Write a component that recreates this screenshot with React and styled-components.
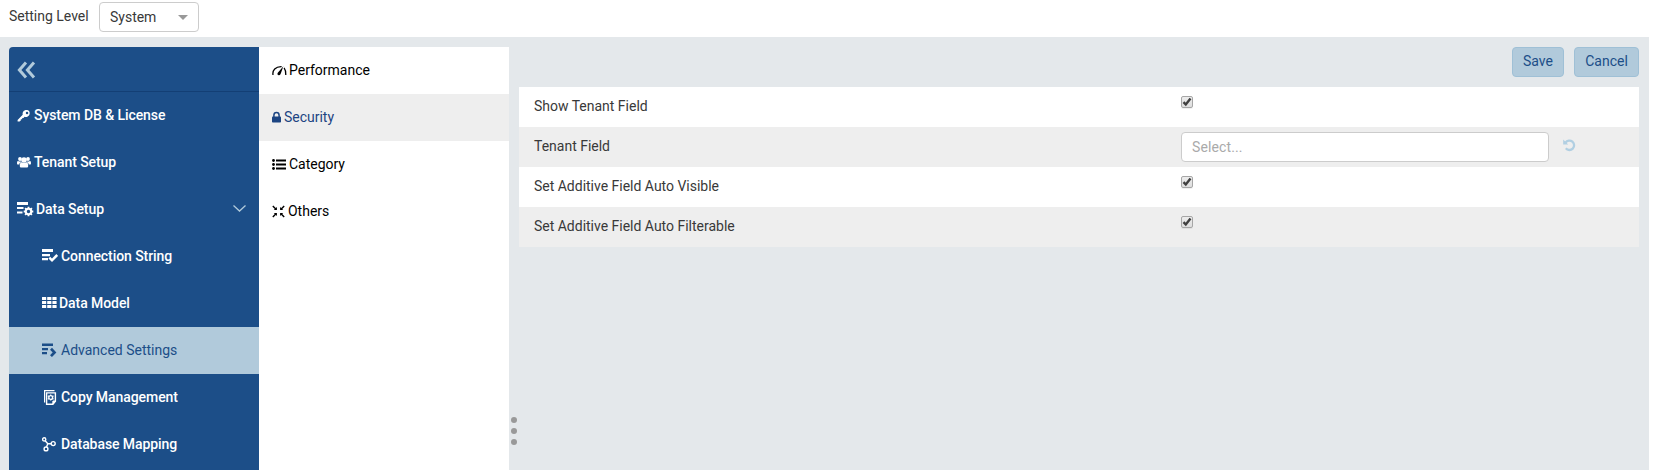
import React from 'react';
import styled, { createGlobalStyle, css } from 'styled-components';

const GlobalStyle = createGlobalStyle`
  * { box-sizing: border-box; }
  html, body { margin: 0; padding: 0; height: 100%; overflow: hidden; background: #fff; }
  body { font-family: Roboto, "Liberation Sans", sans-serif; font-size: 14px; line-height: 20px; color: #393939; letter-spacing: -0.01px; }
  svg { display: block; flex: none; }
`;

const Page = styled.div`
  display: flex;
  flex-direction: column;
  width: 1657px;
  height: 470px;
  overflow: hidden;
`;

const TopBar = styled.header`
  display: flex;
  align-items: flex-start;
  height: 37px;
  padding: 2px 9px 0;
`;

const TopLabel = styled.label`
  width: 90px;
  padding-top: 4px;
  white-space: nowrap;
`;

const LevelSelect = styled.button`
  display: flex;
  align-items: center;
  justify-content: space-between;
  width: 100px;
  height: 30px;
  padding: 0 10px;
  border: 1px solid #ccc;
  border-radius: 4px;
  background: #fff;
  color: inherit;
  font: inherit;
  letter-spacing: inherit;
`;

const Workspace = styled.main`
  display: flex;
  flex: 1;
  width: 1649px;
  padding: 10px 10px 0 9px;
  background: #e4e8eb;
`;

const Sidebar = styled.nav`
  width: 250px;
  background: #1c4e88;
  border-top-left-radius: 4px;
`;

const SidebarHeader = styled.div`
  display: flex;
  align-items: center;
  height: 45px;
  padding: 2px 0 0 8px;
  border-bottom: 1px solid #133f75;
`;

const NavItem = styled.a`
  display: flex;
  align-items: center;
  height: 47px;
  padding-left: ${(p) => (p.$nested ? 33 : 8)}px;
  padding-right: 13px;
  color: #fff;
  font-weight: 500;
  letter-spacing: -0.07px;
  ${(p) =>
    p.$active &&
    css`
      background: #b1cadb;
      color: #1c4e88;
      font-weight: 400;
      letter-spacing: 0;
    `}
`;

const IconSlot = styled.span`
  width: ${(p) => p.$w}px;
  flex: none;
`;

const NavText = styled.span`
  flex: 1;
  padding-bottom: 1px;
  white-space: nowrap;
`;

const SubNav = styled.nav`
  width: 250px;
  background: #fff;
`;

const SubItem = styled.a`
  display: flex;
  align-items: center;
  height: 47px;
  padding-left: 13px;
  background: ${(p) => (p.$active ? '#eee' : '#fff')};
  color: ${(p) => (p.$active ? '#1c4482' : '#000')};
`;

const Splitter = styled.div`
  display: flex;
  flex-direction: column;
  gap: 5px;
  width: 10px;
  padding: 370px 0 0 2px;
`;

const Dot = styled.i`
  width: 6px;
  height: 6px;
  border-radius: 50%;
  background: #999;
`;

const Content = styled.section`
  flex: 1;
`;

const Actions = styled.div`
  display: flex;
  justify-content: flex-end;
  gap: 10px;
  height: 40px;
`;

const ActionButton = styled.button`
  width: ${(p) => p.$w}px;
  height: 30px;
  padding: 0 0 2px;
  border: 1px solid #9fc0d6;
  border-radius: 4px;
  background: #b1cadb;
  color: #1c4e88;
  font: inherit;
  letter-spacing: inherit;
`;

const SettingRow = styled.div`
  display: grid;
  grid-template-columns: 647px 1fr;
  height: 40px;
  padding-left: 15px;
  background: ${(p) => (p.$striped ? '#eee' : '#fff')};
`;

const SettingLabel = styled.span`
  padding-top: 9px;
`;

const SettingValue = styled.div`
  display: flex;
  align-items: flex-start;
  padding-top: ${(p) => p.$top}px;
`;

const CheckBox = styled.span`
  display: flex;
  align-items: center;
  justify-content: center;
  width: 12px;
  height: 12px;
  border: 1px solid #a6a6a6;
  border-radius: 2px;
  background: linear-gradient(#ededed, #dedede);
  box-shadow: 0 1px 0 rgba(0, 0, 0, 0.06);
`;

const FieldSelect = styled.div`
  width: 368px;
  height: 30px;
  margin-right: 14px;
  padding: 4px 10px;
  border: 1px solid #ccc;
  border-radius: 4px;
  background: #fff;
  color: #aaa;
  letter-spacing: 0.12px;
`;

const ResetButton = styled.span`
  padding-top: 7px;
  color: #b1cfe2;
`;

const Svg = ({ w, h, children }) => (
  <svg width={w} height={h} viewBox={`0 0 ${w} ${h}`} fill="currentColor">
    {children}
  </svg>
);

const CollapseIcon = () => (
  <svg width="19" height="18" viewBox="0 0 19 18" fill="none" stroke="#b1cadb" strokeWidth="3">
    <path d="M9 1.5 2.400 9 9 16.500M17 1.500 10.400 9 17 16.500" />
  </svg>
);

const KeyIcon = () => (
  <Svg w={14} h={13}>
    <path fillRule="evenodd" d="M6.300 2.500C7.400 1 9.400.6 11 1.300c1.700.9 2.200 2.900 1.300 4.600C11.300 7.600 9.200 8.300 7.500 7.700L6.500 8.900H5.200v1.300H3.800v1.300L2.600 12.600H.6V10.900L5.700 5.700C5.500 4.500 5.600 3.400 6.300 2.500zM10 2.700a1.250 1.250 0 1 0 .1 2.500 1.250 1.250 0 0 0-.1-2.500z" />
  </Svg>
);

const UsersIcon = () => (
  <Svg w={14} h={13}>
    <circle cx="3" cy="3" r="1.900" />
    <circle cx="11" cy="3" r="1.900" />
    <circle cx="7" cy="4" r="2.800" />
    <path d="M0 7c0-1.400.5-2 1.200-2 .8.600 1.600.7 2.400.4L4.300 6C2.900 6.500 2.400 7.500 2.300 8.500H.8C.3 8.500 0 8 0 7zM14 7c0-1.400-.5-2-1.200-2-.8.600-1.600.7-2.400.4L9.700 6c1.400.5 1.900 1.500 2 2.500h1.500c.5 0 .8-.5.8-1.500zM2.800 9.900C2.800 7.500 3.400 6.300 4.700 6.200c1.400 1.100 3.200 1.100 4.600 0 1.300.1 1.900 1.300 1.900 3.700 0 1.100-.6 1.600-1.600 1.600H4.400c-1 0-1.600-.5-1.600-1.600z" />
  </Svg>
);

const DataSetupIcon = () => (
  <Svg w={17} h={15}>
    <path d="M0 0h11v3H0zM0 5h6.500v2H0zM0 9.500h5.500v2H0z" />
    <circle cx="11.500" cy="9.500" r="2.700" fill="none" stroke="currentColor" strokeWidth="2" />
    <g stroke="currentColor" strokeWidth="1.800">
      {[0, 45, 90, 135].map((a) => (
        <path key={a} d="M11.500 4.700v2M11.500 12.300v2" transform={`rotate(${a} 11.500 9.500)`} />
      ))}
    </g>
  </Svg>
);

const ConnectionIcon = () => (
  <Svg w={16} h={15}>
    <path d="M0 0h11v3H0zM0 5h8v2.200H0zM0 9h6v2.200H0z" />
    <path d="M7.300 8.600l2.700 2.700 5.200-5.300" fill="none" stroke="currentColor" strokeWidth="2.500" />
  </Svg>
);

const GridIcon = () => (
  <Svg w={15} h={13}>
    {[0, 4, 8].map((y) =>
      [0, 5.2, 10.4].map((x) => <rect key={`${x}-${y}`} x={x} y={y} width="4.200" height="3" rx=".3" />)
    )}
  </Svg>
);

const AdvancedIcon = () => (
  <Svg w={15} h={15}>
    <path d="M0 .5h11V3H0zM0 5h6v2.200H0zM0 9h5v2.200H0z" />
    <path d="M9 5.700l3.500 3.700L9 13.100" fill="none" stroke="currentColor" strokeWidth="2.700" />
  </Svg>
);

const CopyIcon = () => (
  <svg width="15" height="17" viewBox="0 0 15 17" fill="none" stroke="currentColor">
    <path d="M2.600 13.500V1.600H12.500" strokeWidth="1.200" />
    <path d="M4.600 3.900h8.800v8.300l-2.500 3H4.600z" strokeWidth="1.400" />
    <path d="M13.400 12l-2.500 3v-3z" fill="currentColor" />
    <circle cx="8.700" cy="8.500" r="1.900" strokeWidth="1.400" />
    <path d="M8.700 5.400v1.200M8.700 10.400v1.200M5.900 6.900l1.100.6M10.400 9.500l1.100.6M5.900 10.100L7 9.500M10.400 7.500l1.100-.6" strokeWidth="1.200" />
  </svg>
);

const MappingIcon = () => (
  <svg width="14" height="15" viewBox="0 0 14 15" fill="none" stroke="currentColor" strokeWidth="1.400">
    <circle cx="2.200" cy="2.400" r="1.600" />
    <circle cx="4" cy="11.900" r="1.900" />
    <circle cx="11.200" cy="6.600" r="2" />
    <path d="M3.200 3.700l2.600 3h3.400M5.800 6.700L4.500 10" />
  </svg>
);

const ChevronIcon = () => (
  <svg width="13" height="9" viewBox="0 0 13 9" fill="none" stroke="#b1cadb" strokeWidth="1.300">
    <path d="M.5.600l6 5.500 6-5.500" />
  </svg>
);

const GaugeIcon = () => (
  <svg width="15" height="11" viewBox="0 0 15 11" fill="none" stroke="currentColor">
    <path d="M1 10C.2 5.300 3.500 1.500 9.600 1.700" strokeWidth="1.300" />
    <path d="M12.100 2.900c1.300 1.800 1.900 4.200 1.700 7.100" strokeWidth="1.300" />
    <path d="M11.400 1.300L8.600 9.100c-.5 1.100-1.500 1.400-2.400 1-.9-.5-1-1.500-.4-2.400z" fill="currentColor" stroke="none" />
  </svg>
);

const LockIcon = () => (
  <Svg w={9} h={13}>
    <rect x="0" y="5.600" width="9" height="6" rx=".8" />
    <path d="M1.900 6.200V4.200a2.600 2.600 0 0 1 5.200 0v2" fill="none" stroke="currentColor" strokeWidth="1.500" />
  </Svg>
);

const ListIcon = () => (
  <Svg w={14} h={11}>
    {[1.5, 5.5, 9.5].map((y) => (
      <g key={y}>
        <circle cx="1.500" cy={y} r="1.400" />
        <rect x="4" y={y - 1} width="10" height="2" />
      </g>
    ))}
  </Svg>
);

const CompressIcon = () => (
  <svg width="13" height="13" viewBox="0 0 13 13" fill="none" stroke="currentColor" strokeWidth="1.400">
    <path d="M.8 1.100l3 3M12.200 1.100l-3 3M.8 11.900l3-3M12.200 11.900l-3-3" />
    <path d="M4.900 2v3.100H1.800zM8.100 2v3.100h3.100zM4.900 11V7.900H1.800zM8.100 11V7.900h3.100z" fill="currentColor" stroke="none" />
  </svg>
);

const CheckMark = () => (
  <svg width="10" height="10" viewBox="0 0 10 10" fill="none" stroke="#404040" strokeWidth="2.400">
    <path d="M1.500 5.100l2.300 2.400L8.500 1.500" />
  </svg>
);

const UndoIcon = () => (
  <svg width="13" height="13" viewBox="0 0 13 13" fill="none" stroke="currentColor" strokeWidth="2.300">
    <path d="M2.500 3.700A4.700 4.700 0 1 1 2.800 9.300" />
    <path d="M.2.400v5h5z" fill="currentColor" stroke="none" />
  </svg>
);

const navItems = [
  { text: 'System DB & License', Icon: KeyIcon, w: 17 },
  { text: 'Tenant Setup', Icon: UsersIcon, w: 17 },
  { text: 'Data Setup', Icon: DataSetupIcon, w: 19, open: true },
  { text: 'Connection String', Icon: ConnectionIcon, w: 19, nested: true },
  { text: 'Data Model', Icon: GridIcon, w: 17, nested: true },
  { text: 'Advanced Settings', Icon: AdvancedIcon, w: 19, nested: true, active: true },
  { text: 'Copy Management', Icon: CopyIcon, w: 19, nested: true },
  { text: 'Database Mapping', Icon: MappingIcon, w: 19, nested: true },
];

const subItems = [
  { text: 'Performance', Icon: GaugeIcon, w: 17 },
  { text: 'Security', Icon: LockIcon, w: 12, active: true },
  { text: 'Category', Icon: ListIcon, w: 17 },
  { text: 'Others', Icon: CompressIcon, w: 16 },
];

const settings = [
  { label: 'Show Tenant Field' },
  { label: 'Tenant Field', select: true },
  { label: 'Set Additive Field Auto Visible' },
  { label: 'Set Additive Field Auto Filterable' },
];

export default function App() {
  return (
    <Page>
      <GlobalStyle />
      <TopBar>
        <TopLabel>Setting Level</TopLabel>
        <LevelSelect>
          System
          <Svg w={10} h={5}>
            <path d="M0 0h10L5 5z" fill="#999" />
          </Svg>
        </LevelSelect>
      </TopBar>
      <Workspace>
        <Sidebar>
          <SidebarHeader>
            <CollapseIcon />
          </SidebarHeader>
          {navItems.map(({ text, Icon, w, nested, active, open }) => (
            <NavItem key={text} $nested={nested} $active={active}>
              <IconSlot $w={w}>
                <Icon />
              </IconSlot>
              <NavText>{text}</NavText>
              {open && <ChevronIcon />}
            </NavItem>
          ))}
        </Sidebar>
        <SubNav>
          {subItems.map(({ text, Icon, w, active }) => (
            <SubItem key={text} $active={active}>
              <IconSlot $w={w}>
                <Icon />
              </IconSlot>
              <NavText>{text}</NavText>
            </SubItem>
          ))}
        </SubNav>
        <Splitter>
          <Dot />
          <Dot />
          <Dot />
        </Splitter>
        <Content>
          <Actions>
            <ActionButton $w={52}>Save</ActionButton>
            <ActionButton $w={65}>Cancel</ActionButton>
          </Actions>
          {settings.map(({ label, select }, i) => (
            <SettingRow key={label} $striped={i % 2 === 1}>
              <SettingLabel>{label}</SettingLabel>
              <SettingValue $top={select ? 5 : 9}>
                {select ? (
                  <>
                    <FieldSelect>Select...</FieldSelect>
                    <ResetButton>
                      <UndoIcon />
                    </ResetButton>
                  </>
                ) : (
                  <CheckBox>
                    <CheckMark />
                  </CheckBox>
                )}
              </SettingValue>
            </SettingRow>
          ))}
        </Content>
      </Workspace>
    </Page>
  );
}
